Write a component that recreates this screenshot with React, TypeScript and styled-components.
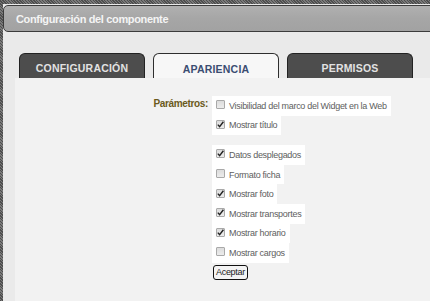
import React from "react";
import styled, { createGlobalStyle } from "styled-components";

const GlobalStyle = createGlobalStyle`
  html, body {
    margin: 0;
    padding: 0;
    background: #eaeaea;
    overflow: hidden;
  }
`;

const Frame = styled.div`
  min-height: 301px;
  box-sizing: border-box;
  padding: 4px 0 0 3px;
  background: repeating-linear-gradient(45deg, #4e4e4e 0 1px, #7a7a7a 1px 2px);
  display: flex;
`;

const Screen = styled.div`
  flex: 1;
  background: #eaeaea;
  display: flex;
  flex-direction: column;
  padding-top: 1px;
`;

const Header = styled.div`
  height: 27px;
  box-sizing: border-box;
  margin-right: -12px;
  border: 1px solid #3c3c3c;
  border-radius: 5px;
  background: linear-gradient(#b0b0b0, #a6a6a6 50%, #a2a2a2);
  display: flex;
  align-items: center;
  padding-left: 12px;
  font-family: "Liberation Sans", Tahoma, sans-serif;
  font-weight: bold;
  font-size: 11px;
  color: #f4f4f4;
  letter-spacing: -0.35px;
`;

const Body = styled.div`
  flex: 1;
  display: flex;
  flex-direction: column;
  padding-top: 21px;
`;

const TabRow = styled.div`
  display: flex;
  gap: 8px;
  padding-left: 16px;
  height: 25px;
`;

const Tab = styled.div<{ $active?: boolean }>`
  width: 126px;
  box-sizing: border-box;
  border: 1px solid ${(p) => (p.$active ? "#2e2e2e" : "#222")};
  border-bottom: none;
  border-radius: 6px 6px 0 0;
  background: ${(p) => (p.$active ? "#f7f7f7" : "#4d4d4d")};
  color: ${(p) => (p.$active ? "#3b4d72" : "#e2e2e2")};
  display: flex;
  align-items: center;
  justify-content: center;
  padding-top: ${(p) => (p.$active ? "5px" : "3px")};
  font-family: "Liberation Sans", Arial, sans-serif;
  font-weight: bold;
  font-size: 10.5px;
  letter-spacing: 0.2px;
`;

const Panel = styled.div`
  flex: 1;
  margin-left: 12px;
  background: #f2f2f2;
  padding-top: 18px;
`;

const FormRow = styled.div`
  display: flex;
  align-items: flex-start;
`;

const Label = styled.div`
  width: 197px;
  box-sizing: border-box;
  text-align: right;
  padding-right: 4px;
  padding-top: 2px;
  font-family: "Liberation Sans", Tahoma, sans-serif;
  font-weight: bold;
  font-size: 10px;
  color: #6b5a1c;
  letter-spacing: -0.35px;
`;

const Options = styled.div`
  display: flex;
  flex-direction: column;
  align-items: flex-start;
`;

const Group = styled.div`
  display: flex;
  flex-direction: column;
  align-items: flex-start;
  & + & {
    margin-top: 10px;
  }
`;

const Option = styled.label`
  display: flex;
  align-items: center;
  gap: 4px;
  height: 19.6px;
  padding: 0 4px;
  background: #ffffff;
  font-family: "Liberation Sans", "Segoe UI", sans-serif;
  font-size: 9px;
  color: #5e5e5e;
  letter-spacing: -0.3px;
  white-space: nowrap;
`;

const Box = styled.span`
  width: 9px;
  height: 9px;
  box-sizing: border-box;
  border: 1px solid #a9a9a9;
  border-radius: 1px;
  background: linear-gradient(#dcdcdc, #ececec);
  display: flex;
  align-items: center;
  justify-content: center;
  margin-bottom: 2px;
`;

const Button = styled.button`
  margin-top: 2px;
  margin-left: 1px;
  height: 15px;
  padding: 0 2px;
  border: 1px solid #111;
  border-radius: 3px;
  background: #f4f4f4;
  font-family: "Liberation Sans", "Segoe UI", sans-serif;
  font-size: 9px;
  color: #222;
  letter-spacing: -0.3px;
  line-height: 1;
`;

const Check = () => (
  <svg width="7" height="7" viewBox="0 0 7 7">
    <path d="M0.8 3.6 L2.6 5.6 L6.4 0.8" fill="none" stroke="#222" strokeWidth="1.4" />
  </svg>
);

type Item = { text: string; checked: boolean };

const groups: Item[][] = [
  [
    { text: "Visibilidad del marco del Widget en la Web", checked: false },
    { text: "Mostrar título", checked: true },
  ],
  [
    { text: "Datos desplegados", checked: true },
    { text: "Formato ficha", checked: false },
    { text: "Mostrar foto", checked: true },
    { text: "Mostrar transportes", checked: true },
    { text: "Mostrar horario", checked: true },
    { text: "Mostrar cargos", checked: false },
  ],
];

export default function App() {
  return (
    <>
      <GlobalStyle />
      <Frame>
        <Screen>
          <Header>Configuración del componente</Header>
          <Body>
            <TabRow>
              <Tab>CONFIGURACIÓN</Tab>
              <Tab $active>APARIENCIA</Tab>
              <Tab>PERMISOS</Tab>
            </TabRow>
            <Panel>
              <FormRow>
                <Label>Parámetros:</Label>
                <Options>
                  {groups.map((g, i) => (
                    <Group key={i}>
                      {g.map((it) => (
                        <Option key={it.text}>
                          <Box>{it.checked && <Check />}</Box>
                          {it.text}
                        </Option>
                      ))}
                    </Group>
                  ))}
                  <Button>Aceptar</Button>
                </Options>
              </FormRow>
            </Panel>
          </Body>
        </Screen>
      </Frame>
    </>
  );
}
